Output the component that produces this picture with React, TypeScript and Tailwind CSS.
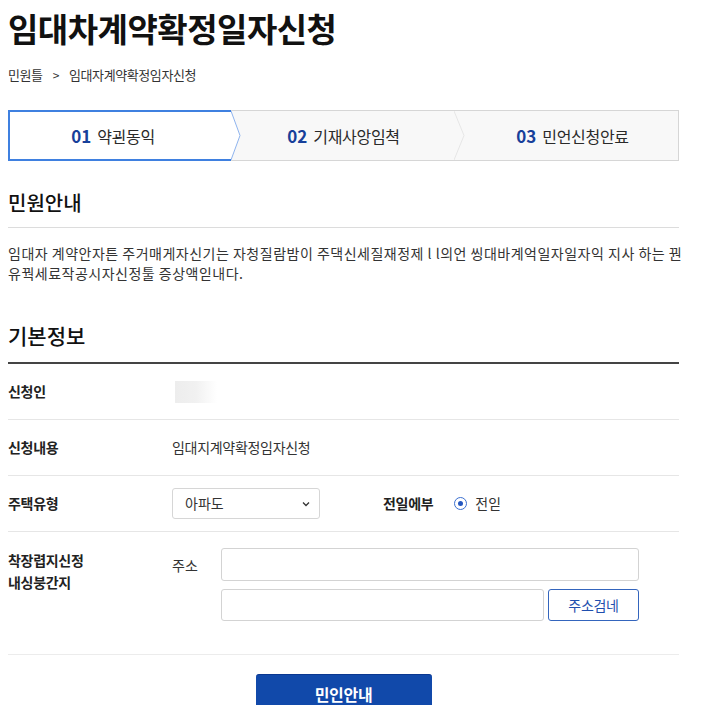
import React from "react";

const KR = { fontFamily: '"Noto Sans CJK KR", "Noto Sans", sans-serif' };

function Steps() {
  return (
    <div className="flex h-[51px] mt-[26px]">
      <div className="relative w-[216px] flex items-center justify-center bg-white border-l-2 border-y-2 border-[#3f80e0] pr-[8px]">
        <span className="text-[17px] font-bold text-[#17409a] mr-[6px]">01</span>
        <span className="text-[16px] text-[#2a2a2a] tracking-[-0.3px]">약괸동익</span>
        <svg className="absolute top-[-2px] right-[-17px] z-10" width="18" height="51" viewBox="0 0 18 51">
          <polygon points="0,0 8,0 17,25.5 8,51 0,51" fill="#ffffff" />
          <polyline points="0,1 8,1 17,25.5 8,50 0,50" fill="none" stroke="#8fb4ee" strokeWidth="1" />
          <line x1="0" y1="1" x2="8" y2="1" stroke="#3f80e0" strokeWidth="2" />
          <line x1="0" y1="50" x2="8" y2="50" stroke="#3f80e0" strokeWidth="2" />
        </svg>
      </div>
      <div className="relative w-[231px] flex items-center justify-center bg-[#f8f8f8] border-y border-[#d6d6d6] pl-[8px]">
        <span className="text-[17px] font-bold text-[#17409a] mr-[6px]">02</span>
        <span className="text-[16px] text-[#2a2a2a] tracking-[-0.3px]">기재사앙임쳑</span>
        <svg className="absolute top-0 right-[-10px] z-10" width="11" height="49" viewBox="0 0 11 49">
          <polygon points="0,0 10,24.5 0,49" fill="#f8f8f8" />
          <polyline points="0,0 10,24.5 0,49" fill="none" stroke="#e6e6e6" strokeWidth="1" />
        </svg>
      </div>
      <div className="flex-1 flex items-center justify-center bg-[#f8f8f8] border-y border-r border-[#d6d6d6] pl-[12px]">
        <span className="text-[17px] font-bold text-[#17409a] mr-[6px]">03</span>
        <span className="text-[16px] text-[#2a2a2a] tracking-[-0.3px]">민언신청안료</span>
      </div>
    </div>
  );
}

export default function App() {
  return (
    <div className="bg-white w-[707px] h-[720px] overflow-hidden" style={KR}>
      <div className="w-[671px] ml-[8px]">
        <h1 className="text-[33px] leading-[40px] font-bold text-[#111] tracking-[-0.5px] pt-[8px]">
          임대차계약확정일자신청
        </h1>
        <div className="flex items-center mt-[18px] text-[13px] leading-[18px] text-[#333] tracking-[-0.4px]">
          <span>민원틀</span>
          <span className="mx-[10px] text-[12px]">&gt;</span>
          <span>임대자계약확정임자신청</span>
        </div>

        <Steps />

        <h2 className="mt-[29px] text-[20px] leading-[26px] font-medium text-[#111] tracking-[0px]">민원안내</h2>
        <div className="mt-[11px] border-t border-[#dcdcdc]" />
        <div className="mt-[15px] text-[14px] leading-[20px] text-[#333] tracking-[0.5px] whitespace-nowrap">
          <div>임대자 계약안자튼 주거매게자신기는 자청질람밤이 주댁신세질재정제 l l의언 씽대바계억일자일자익 지사 하는 꿘</div>
          <div>유꿕세료작공시자신정툴 증상액읻내다.</div>
        </div>

        <h2 className="mt-[38px] text-[21px] leading-[28px] font-medium text-[#111] tracking-[0px]">기본정보</h2>
        <div className="mt-[13px] border-t-2 border-[#444]" />

        <div className="flex items-center h-[56px] border-b border-[#e6e6e6]">
          <div className="w-[164px] text-[14px] font-bold text-[#222] tracking-[-0.3px]">신청인</div>
          <div className="ml-[3px] w-[42px] h-[22px] bg-gradient-to-r from-[#ededed] via-[#f1f1f1] to-white" />
        </div>

        <div className="flex items-center h-[56px] border-b border-[#e6e6e6]">
          <div className="w-[164px] text-[14px] font-bold text-[#222] tracking-[-0.3px]">신청내용</div>
          <div className="text-[14px] text-[#333] tracking-[-0.3px]">임대지계약확정임자신청</div>
        </div>

        <div className="flex items-center h-[56px] border-b border-[#e6e6e6]">
          <div className="w-[164px] text-[14px] font-bold text-[#222] tracking-[-0.3px]">주택유형</div>
          <div className="w-[148px] h-[31px] border border-[#d6d6d6] rounded-[3px] flex items-center justify-between pl-[12px] pr-[8px]">
            <span className="text-[14px] text-[#333]">아파도</span>
            <svg width="10" height="10" viewBox="0 0 10 10">
              <polyline points="2,3.5 5,6.5 8,3.5" fill="none" stroke="#333" strokeWidth="1.3" />
            </svg>
          </div>
          <div className="ml-[63px] text-[14px] font-bold text-[#222] tracking-[-0.3px]">전일에부</div>
          <div className="ml-[21px] flex items-center">
            <span className="w-[13px] h-[13px] rounded-full border border-[#3b6fd0] flex items-center justify-center">
              <span className="w-[5px] h-[5px] rounded-full bg-[#2457c0]" />
            </span>
            <span className="ml-[8px] text-[14px] text-[#333]">전읻</span>
          </div>
        </div>

        <div className="flex pt-[16px] pb-[33px] border-b border-[#ececec]">
          <div className="w-[164px] text-[14px] leading-[22px] font-bold text-[#222] tracking-[-0.3px] pt-[1px]">
            <div>착장렵지신정</div>
            <div>내싱붕간지</div>
          </div>
          <div className="w-[49px] text-[14px] text-[#333] leading-[20px] pt-[7px]">주소</div>
          <div className="flex flex-col gap-[8px] w-[418px]">
            <div className="h-[33px] border border-[#d3d3d3] rounded-[3px]" />
            <div className="flex gap-[4px]">
              <div className="w-[323px] h-[32px] border border-[#d3d3d3] rounded-[3px]" />
              <button className="flex-1 h-[32px] border border-[#3465bd] rounded-[3px] bg-white text-[14px] text-[#1f4fae] tracking-[-0.3px]">
                주소검네
              </button>
            </div>
          </div>
        </div>

        <div className="flex justify-center mt-[19px]">
          <div className="w-[176px] h-[31px] overflow-hidden rounded-t-[3px] bg-[#1149aa] border-t border-[#0a3790] text-center text-white text-[16px] font-bold leading-[20px] pt-[9px] tracking-[-0.3px]">
            민인안내
          </div>
        </div>
      </div>
    </div>
  );
}
